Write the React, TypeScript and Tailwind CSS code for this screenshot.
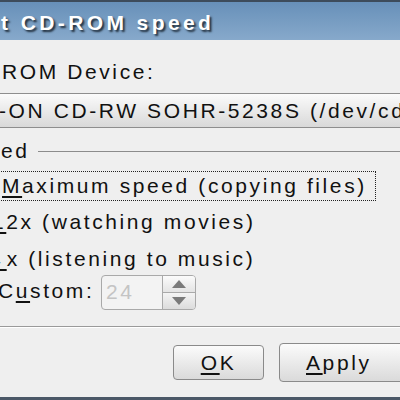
import React from 'react';

const font = "font-['Liberation_Sans',Arial,sans-serif]";

const Spin: React.FC = () => (
  <div className="flex h-[35px] w-[95px] rounded-[4px] border border-[#a9a9a9] bg-[#f3f3f3] overflow-hidden">
    <div className="flex-1 pl-[4px] pt-[4px] text-[21px] leading-[24px] tracking-[2.6px] text-[#c4c4c4]">24</div>
    <div className="flex w-[33px] flex-col border-l border-[#a9a9a9]">
      <div className="flex flex-1 items-center justify-center border-b border-[#a9a9a9] bg-gradient-to-b from-[#fbfbfb] to-[#e4e4e4]">
        <svg width="14" height="8" viewBox="0 0 14 8">
          <polygon points="7,0 14,8 0,8" fill="#7a7a7a" />
        </svg>
      </div>
      <div className="flex flex-1 items-center justify-center bg-gradient-to-b from-[#f4f4f4] to-[#dcdcdc]">
        <svg width="14" height="8" viewBox="0 0 14 8">
          <polygon points="0,0 14,0 7,8" fill="#7a7a7a" />
        </svg>
      </div>
    </div>
  </div>
);

export default function App() {
  return (
    <div className={`${font} flex h-[400px] w-[400px] flex-col overflow-hidden bg-[#efefef] text-[#111]`}>
      {/* title bar */}
      <div className="h-[40px] shrink-0 border-t-2 border-[#3d4c5c] bg-gradient-to-b from-[#6790b9] to-[#87a9cb]">
        <div className="whitespace-nowrap pl-[1px] pt-[9px] text-[21px] font-bold leading-[24px] tracking-[3.4px] text-white [text-shadow:2px_2px_2px_#22303e]">
          t CD-ROM speed
        </div>
      </div>

      <div className="flex flex-1 flex-col text-[21px] leading-[24px] tracking-[2.6px]">
        <div className="h-[53px] shrink-0 pl-[2px] pt-[20px] whitespace-nowrap">ROM Device:</div>

        {/* combo */}
        <div className="-ml-[10px] h-[35px] w-[430px] shrink-0 rounded-[4px] border border-[#8e8e8e] bg-gradient-to-b from-[#fbfbfb] to-[#d9d9d9] pl-[8px] pt-[5px] whitespace-nowrap">
          -ON CD-RW SOHR-5238S (/dev/cdrom)
        </div>

        {/* group title */}
        <div className="flex h-[35px] shrink-0 items-center pt-[11px]">
          <span className="pl-[1px] whitespace-nowrap">ed</span>
          <div className="ml-[8px] h-[1px] flex-1 bg-[#8c8c8c]" />
        </div>

        {/* radios */}
        <div className="mt-[8px] -ml-[10px] h-[30px] w-[386px] shrink-0 border border-dotted border-[#222] pl-[11px] pt-[2px] whitespace-nowrap">
          <span className="underline decoration-[1.5px] underline-offset-[3px]">M</span>aximum speed (copying files)
        </div>
        <div className="mt-[9px] -ml-[8px] whitespace-nowrap">
          <span className="underline decoration-[1.5px] underline-offset-[3px]">1</span>2x (watching movies)
        </div>
        <div className="mt-[13px] -ml-[11px] whitespace-nowrap">
          <span className="underline decoration-[1.5px] underline-offset-[3px] tracking-[6px]">4</span>x (listening to music)
        </div>
        <div className="mt-[4px] flex h-[35px] shrink-0 items-start">
          <div className="-ml-[2px] w-[103px] shrink-0 pt-[4px] whitespace-nowrap">
            C<span className="underline decoration-[1.5px] underline-offset-[3px]">u</span>stom:
          </div>
          <Spin />
        </div>

        {/* separator */}
        <div className="mt-[16px] h-[2px] shrink-0 border-t border-b border-t-[#9a9a9a] border-b-white" />

        {/* buttons */}
        <div className="flex flex-1 items-center">
          <button className="ml-[173px] flex h-[35px] w-[91px] shrink-0 items-center justify-center rounded-[4px] border border-[#8a8a8a] bg-gradient-to-b from-[#fbfbfb] to-[#dadada] tracking-[2.6px]">
            <span className="underline decoration-[1.5px] underline-offset-[3px]">O</span>K
          </button>
          <button className="ml-[15px] flex h-[39px] w-[140px] shrink-0 items-center rounded-[4px] border border-[#8a8a8a] bg-gradient-to-b from-[#fbfbfb] to-[#dadada] pl-[26px] tracking-[2.6px]">
            <span className="underline decoration-[1.5px] underline-offset-[3px]">A</span>pply
          </button>
        </div>
      </div>

      <div className="h-[3px] shrink-0 bg-[#4b5867]" />
    </div>
  );
}
